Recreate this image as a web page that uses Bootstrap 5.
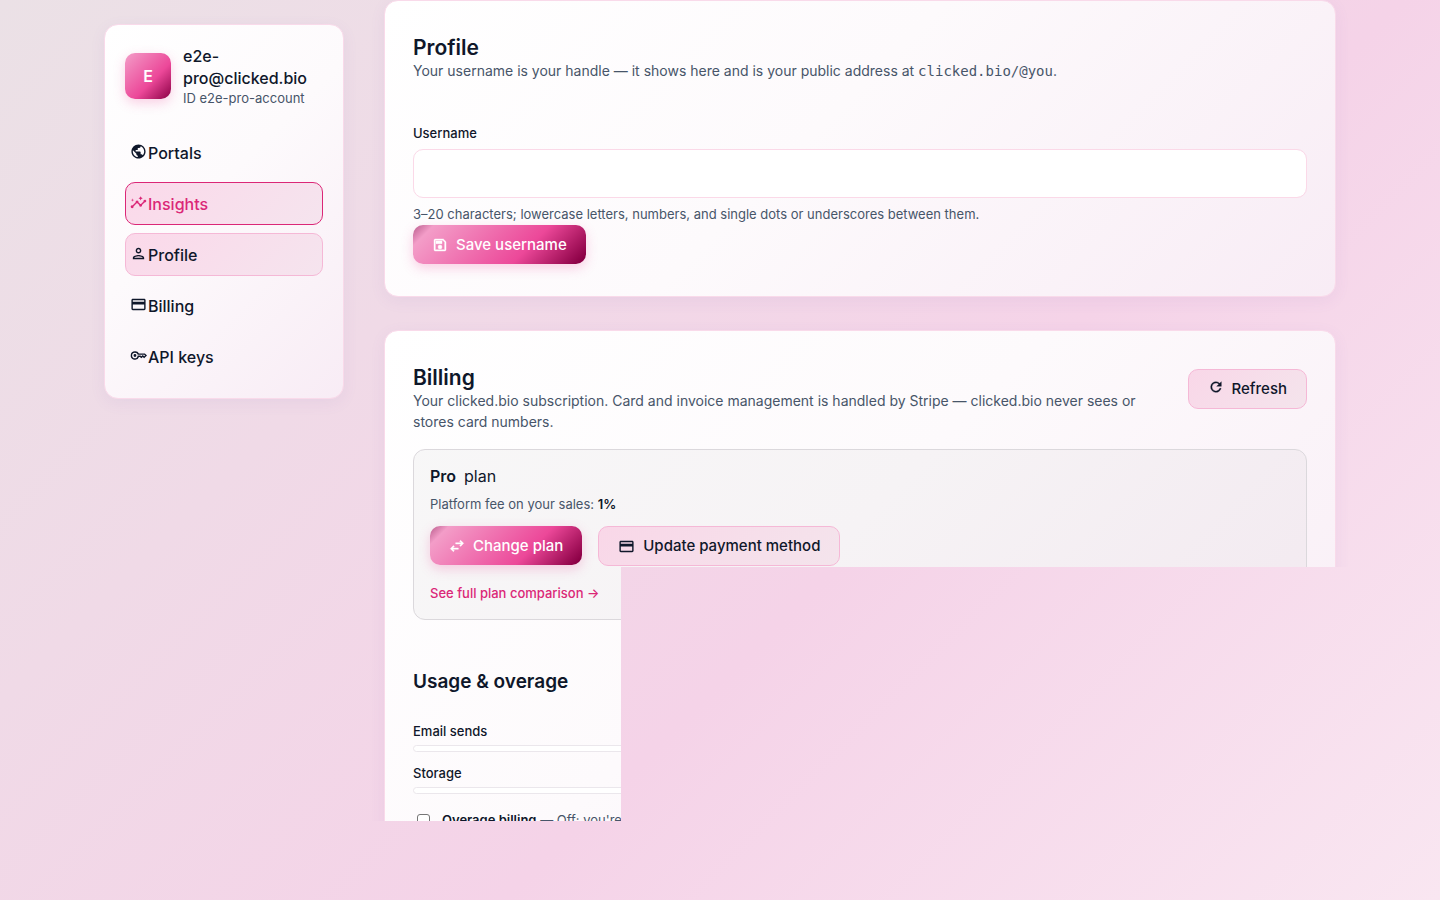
<!DOCTYPE html>
<html lang="en">
<head>
<meta charset="utf-8">
<meta name="viewport" content="width=device-width, initial-scale=1">
<title>Account – clicked.bio</title>
<link href="https://cdn.jsdelivr.net/npm/bootstrap@5.3.0/dist/css/bootstrap.min.css" rel="stylesheet">
<style>
:root { --ink: #0f172a; --soft: #475569; --pink: #db2777; }
body {
  font-family: Inter, "Liberation Sans", sans-serif;
  font-size: 16px; line-height: 22px; color: var(--ink);
  min-height: 100vh;
  background: linear-gradient(135deg, #ebe1e6 0%, #f5d3e8 60%, #f9e6f1 100%) no-repeat fixed;
}
.shell { max-width: 1232px; display: grid; grid-template-columns: 240px minmax(0, 1fr); gap: 40px; }
.stack { display: flex; flex-direction: column; gap: 33px; }
.panel {
  border: 1px solid #f9daea; border-radius: 14px;
  background: linear-gradient(135deg, #fff 0%, #fdfafc 45%, #f8ecf5 100%);
  box-shadow: 0 4px 16px rgba(120, 80, 180, .07);
}
.side { margin-top: 24px; padding: 20px; }
.avatar {
  width: 46px; height: 46px; border-radius: 10px; flex: none; color: #fff; font-weight: 600;
  background: linear-gradient(135deg, #f39dc8 0%, #ec4899 60%, #8b0045 100%);
  box-shadow: 0 4px 12px rgba(236, 72, 153, .25);
}
.handle { font-weight: 500; }
.ident { font-size: 13px; line-height: 18px; color: var(--soft); }
.menu-item {
  display: flex; align-items: center; gap: 1px; height: 43px; padding: 0 4px;
  border: 1px solid transparent; border-radius: 10px; color: var(--ink);
  font-weight: 500; text-decoration: none;
}
.menu-item svg { margin-bottom: 2px; }
.menu-item.current { border-color: #f5b8d6; background: linear-gradient(135deg, #fbd9ea, #f5e4ee); }
.menu-item.hot { border-color: var(--pink); color: var(--pink); background: linear-gradient(135deg, #fbd9ea, #f5e4ee); }
svg { fill: currentColor; flex: none; }
.section { padding: 34px 28px 32px; }
h2 { font-size: 21px; line-height: 25px; font-weight: 600; margin: 0; }
h3 { font-size: 19px; line-height: 24px; font-weight: 600; margin: 50px 0 27px; }
.copy { font-size: 14px; line-height: 21px; color: var(--soft); margin: 0; }
.hint { font-size: 13px; line-height: 21px; color: var(--soft); margin: 6px 0 0; }
code { font-family: "DejaVu Sans Mono", monospace; font-size: 14px; color: inherit; }
.field-label { display: block; font-size: 13px; line-height: 20px; font-weight: 500; }
.form-control { height: 49px; border-color: #fbd9e8; border-radius: 10px; margin-top: 6px; }
.profile-form { margin-top: 41px; }
.action {
  display: inline-flex; align-items: center; gap: 8px; border-radius: 10px; padding: 0 19px; height: 40px;
  font-size: 15px; font-weight: 500; line-height: 20px; color: var(--ink); flex: none;
}
.action-main, .action-main:hover {
  height: 39px; border: 0; color: #fff;
  background: linear-gradient(135deg, #b95b8c 0%, #f39dc8 10%, #ec4899 65%, #8b0045 96%);
  box-shadow: 0 4px 12px rgba(236, 72, 153, .25);
}
.action-quiet, .action-quiet:hover { border: 1px solid #f5b8d6; background: linear-gradient(135deg, #f9d7e8, #f4e4ec); }
.plan { border: 1px solid #dbd8dc; border-radius: 12px; padding: 16px; margin-top: 17px; background: rgba(30, 20, 30, .03); }
.plan-name { line-height: 21px; }
.plan .hint { margin-top: 7px; }
.plan-actions { margin: 11px 0 17px; }
.plan b, .overage b { color: var(--ink); font-weight: 600; }
.compare { display: block; font-size: 13px; line-height: 20px; font-weight: 500; color: var(--pink); text-decoration: none; }
.meter { margin-bottom: 11px; }
.progress { height: 7px; border: 1px solid #ebe7ec; border-radius: 4px; background: #fff; margin-top: 4px; }
.overage { margin-top: 16px; font-size: 13px; line-height: 20px; color: var(--soft); }
.form-check-input { width: 13px; height: 13px; margin: 4px 12px 0 4px; border-color: #767676; flex: none; }
.form-check-input[type=checkbox] { border-radius: 3px; }
.stepped {
  clip-path: polygon(-40px -33px, calc(100% + 40px) -33px, calc(100% + 40px) 237px, 237px 237px, 237px 491px, -40px 491px);
}
</style>
</head>
<body>
<svg width="0" height="0" class="position-absolute" aria-hidden="true">
  <symbol id="card-icon" viewBox="0 0 24 24"><path d="M20 4H4c-1.110 0-2 .89-2 2v12c0 1.110.89 2 2 2h16c1.110 0 2-.89 2-2V6c0-1.110-.89-2-2-2zm0 14H4v-6h16v6zm0-10H4V6h16v2z"/></symbol>
</svg>
<div class="shell mx-auto align-items-start">
  <aside class="panel side">
    <div class="d-flex align-items-center mb-4">
      <div class="avatar d-flex align-items-center justify-content-center me-2">E</div>
      <div class="ms-1"><div class="handle">e2e-<br>pro@clicked.bio</div><div class="ident">ID e2e-pro-account</div></div>
    </div>
    <nav class="d-flex flex-column gap-2">
      <a class="menu-item" href="#"><svg width="17" height="17" viewBox="0 0 24 24"><path d="M12 2C6.480 2 2 6.480 2 12s4.480 10 10 10 10-4.480 10-10S17.520 2 12 2zm-1 17.930c-3.950-.49-7-3.850-7-7.930 0-.62.080-1.210.210-1.790L9 15v1c0 1.100.9 2 2 2v1.930zm6.900-2.540c-.26-.81-1-1.390-1.900-1.390h-1v-3c0-.55-.45-1-1-1H8v-2h2c.55 0 1-.45 1-1V7h2c1.100 0 2-.9 2-2v-.41c2.930 1.190 5 4.060 5 7.410 0 2.080-.8 3.970-2.100 5.390z"/></svg>Portals</a>
      <a class="menu-item hot" href="#"><svg width="17" height="17" viewBox="0 0 24 24"><path d="M21 8c-1.450 0-2.260 1.440-1.930 2.510l-3.550 3.560c-.3-.09-.74-.09-1.040 0l-2.550-2.550C12.270 10.450 11.460 9 10 9c-1.450 0-2.270 1.440-1.930 2.520l-4.560 4.550C2.440 15.740 1 16.550 1 18c0 1.100.9 2 2 2 1.450 0 2.260-1.440 1.930-2.510l4.550-4.560c.3.090.74.090 1.040 0l2.550 2.550C12.730 16.550 13.540 18 15 18c1.450 0 2.270-1.440 1.930-2.520l3.560-3.550C21.560 12.260 23 11.450 23 10c0-1.100-.9-2-2-2z"/><path d="M15 9l.94-2.070L18 6l-2.060-.93L15 3l-.92 2.070L12 6l2.080.93zM3.500 11L4 9l2-.5L4 8l-.5-2L3 8l-2 .5L3 9z"/></svg>Insights</a>
      <a class="menu-item current" href="#"><svg width="17" height="17" viewBox="0 0 24 24"><path d="M12 6c1.100 0 2 .9 2 2s-.9 2-2 2-2-.9-2-2 .9-2 2-2m0 10c2.700 0 5.800 1.290 6 2H6c.230-.72 3.310-2 6-2m0-12C9.790 4 8 5.790 8 8s1.790 4 4 4 4-1.790 4-4-1.790-4-4-4zm0 10c-2.670 0-8 1.340-8 4v2h16v-2c0-2.660-5.330-4-8-4z"/></svg>Profile</a>
      <a class="menu-item" href="#"><svg width="17" height="17"><use href="#card-icon"/></svg>Billing</a>
      <a class="menu-item" href="#"><svg width="17" height="17" viewBox="0 0 24 24"><path fill-rule="evenodd" d="M7 6a6 6 0 1 0 5.650 8H14l2 2 2-2 2 2 4-4-3-3h-8.350A6 6 0 0 0 7 6zm0 2c2 0 3.400 1.200 3.900 3h9.300l1 1-1.200 1.200-2-2-2 2-1.100-1.200h-4C10.400 14.700 9 16 7 16a4 4 0 0 1 0-8zm0 2a2 2 0 1 0 0 4 2 2 0 0 0 0-4z"/></svg>API keys</a>
    </nav>
  </aside>
  <main class="stack">
    <section class="panel section">
      <h2>Profile</h2>
      <p class="copy">Your username is your handle — it shows here and is your public address at <code>clicked.bio/@you</code>.</p>
      <form class="profile-form">
        <label class="field-label" for="username">Username</label>
        <input class="form-control" id="username" type="text">
        <p class="hint">3–20 characters; lowercase letters, numbers, and single dots or underscores between them.</p>
        <button class="btn action action-main" type="button"><svg width="16" height="16" viewBox="0 0 24 24"><path fill-rule="evenodd" d="M17 3H5a2 2 0 0 0-2 2v14a2 2 0 0 0 2 2h14a2 2 0 0 0 2-2V7zm2 16H5V5h11.200L19 7.800zM12 12a3 3 0 1 0 0 6 3 3 0 0 0 0-6zM6 6h9v4H6z" stroke="currentColor" stroke-width=".6"/></svg>Save username</button>
      </form>
    </section>
    <section class="panel section stepped">
      <div class="d-flex align-items-start justify-content-between gap-3">
        <div><h2>Billing</h2><p class="copy">Your clicked.bio subscription. Card and invoice management is handled by Stripe — clicked.bio never sees or stores card numbers.</p></div>
        <button class="btn action action-quiet mt-1" type="button"><svg width="16" height="16" viewBox="0 0 24 24" class="mb-1"><path d="M17.650 6.350A7.960 7.960 0 0 0 12 4a8 8 0 1 0 7.730 10h-2.080A6 6 0 1 1 12 6c1.660 0 3.140.69 4.220 1.780L13 11h7V4z" stroke="currentColor" stroke-width=".5"/></svg>Refresh</button>
      </div>
      <div class="plan">
        <div class="plan-name d-flex gap-2"><b>Pro</b><span>plan</span></div>
        <p class="hint">Platform fee on your sales: <b>1%</b></p>
        <div class="plan-actions d-flex align-items-start gap-3">
          <button class="btn action action-main" type="button"><svg width="16" height="16" viewBox="0 0 24 24"><path d="M22 8l-4.600-4.600L16 4.800 18.200 7H10v2h8.200L16 11.200l1.400 1.400zM2 16l4.600 4.600L8 19.200 5.800 17H14v-2H5.800L8 12.800l-1.400-1.400z" stroke="currentColor" stroke-width=".6"/></svg>Change plan</button>
          <button class="btn action action-quiet" type="button"><svg width="17" height="17"><use href="#card-icon"/></svg>Update payment method</button>
        </div>
        <a class="compare" href="#">See full plan comparison →</a>
      </div>
      <h3>Usage &amp; overage</h3>
      <div class="meter"><div class="field-label" id="sends">Email sends</div><div class="progress" role="progressbar" aria-labelledby="sends" aria-valuenow="0"></div></div>
      <div class="meter"><div class="field-label" id="storage">Storage</div><div class="progress" role="progressbar" aria-labelledby="storage" aria-valuenow="0"></div></div>
      <div class="overage d-flex"><input class="form-check-input" type="checkbox" id="overage"><label for="overage"><b>Overage billing</b> — Off: you're</label></div>
    </section>
  </main>
</div>
<script src="https://cdn.jsdelivr.net/npm/bootstrap@5.3.0/dist/js/bootstrap.bundle.min.js"></script>
</body>
</html>
